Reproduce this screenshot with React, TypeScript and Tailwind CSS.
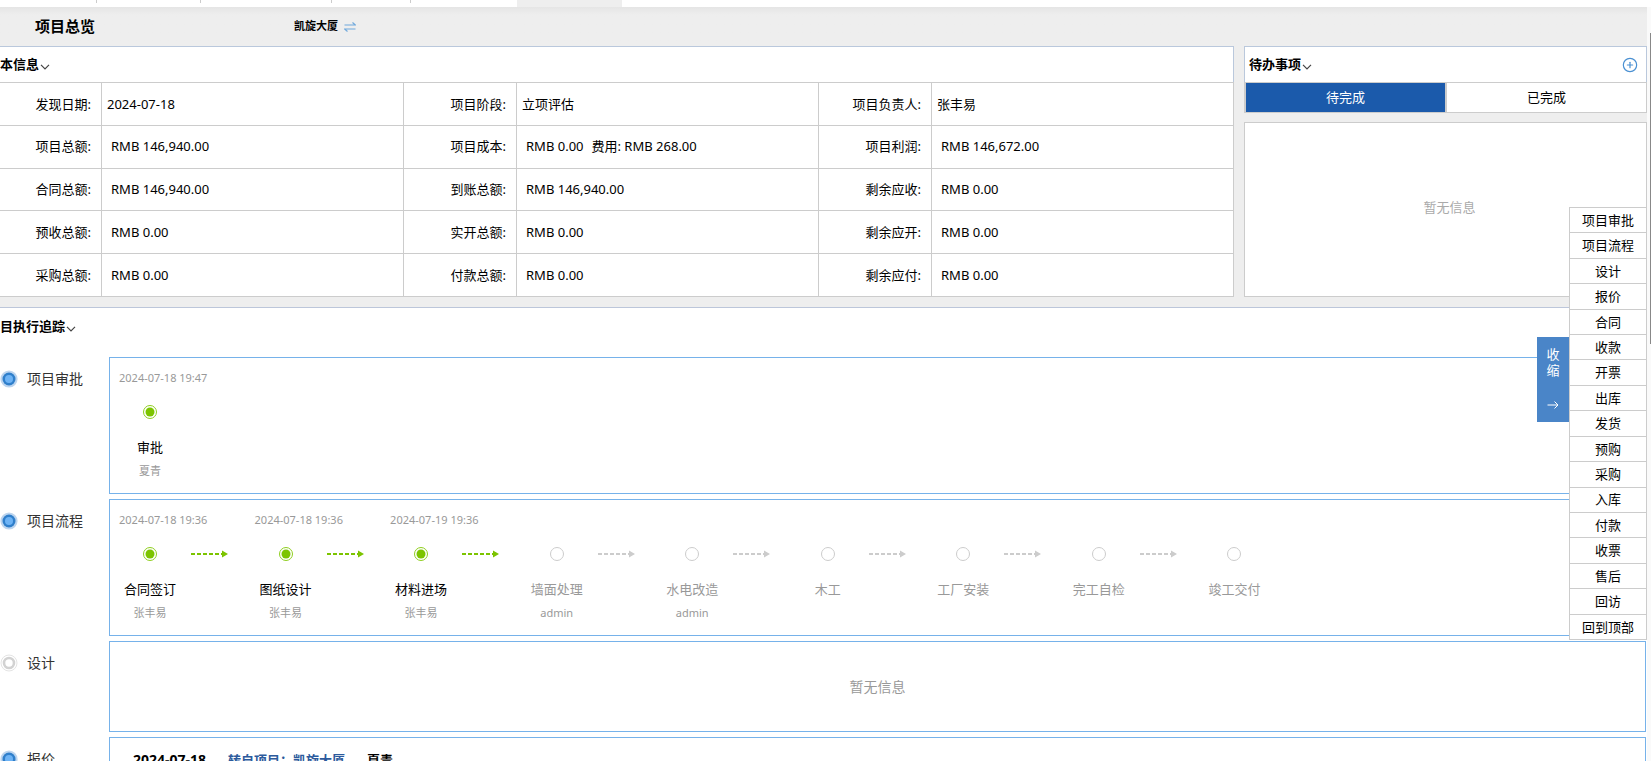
import { useState } from "react";
import { CirclePlus } from "lucide-react";

interface Cell {
  label: string;
  value: string;
  extra?: string;
}

interface Step {
  name: string;
  date?: string;
  person?: string;
  done?: boolean;
}

const info: Cell[][] = [
  [
    { label: "发现日期:", value: "2024-07-18" },
    { label: "项目阶段:", value: "立项评估" },
    { label: "项目负责人:", value: "张丰易" },
  ],
  [
    { label: "项目总额:", value: "RMB 146,940.00" },
    { label: "项目成本:", value: "RMB 0.00", extra: "费用: RMB 268.00" },
    { label: "项目利润:", value: "RMB 146,672.00" },
  ],
  [
    { label: "合同总额:", value: "RMB 146,940.00" },
    { label: "到账总额:", value: "RMB 146,940.00" },
    { label: "剩余应收:", value: "RMB 0.00" },
  ],
  [
    { label: "预收总额:", value: "RMB 0.00" },
    { label: "实开总额:", value: "RMB 0.00" },
    { label: "剩余应开:", value: "RMB 0.00" },
  ],
  [
    { label: "采购总额:", value: "RMB 0.00" },
    { label: "付款总额:", value: "RMB 0.00" },
    { label: "剩余应付:", value: "RMB 0.00" },
  ],
];

const approval: Step[] = [
  { name: "审批", date: "2024-07-18 19:47", person: "夏青", done: true },
];

const flow: Step[] = [
  { name: "合同签订", date: "2024-07-18 19:36", person: "张丰易", done: true },
  { name: "图纸设计", date: "2024-07-18 19:36", person: "张丰易", done: true },
  { name: "材料进场", date: "2024-07-19 19:36", person: "张丰易", done: true },
  { name: "墙面处理", person: "admin" },
  { name: "水电改造", person: "admin" },
  { name: "木工" },
  { name: "工厂安装" },
  { name: "完工自检" },
  { name: "竣工交付" },
];

const anchors = [
  "项目审批", "项目流程", "设计", "报价", "合同", "收款", "开票", "出库", "发货",
  "预购", "采购", "入库", "付款", "收票", "售后", "回访", "回到顶部",
];

const Chevron = () => (
  <svg width="10" height="6" viewBox="0 0 10 6" fill="none" stroke="#444" strokeWidth="1.2" className="mt-1 ml-px">
    <path d="M1 0.8L5 4.8L9 0.8" />
  </svg>
);

const SwapIcon = () => (
  <svg width="12" height="10" viewBox="0 0 12 10" fill="none" stroke="#6fa8dc" strokeWidth="1.2">
    <path d="M0.5 3H11.5L8.5 0.5M11.5 7H0.5L3.5 9.5" />
  </svg>
);

const Dot = ({ active }: { active: boolean }) => (
  <svg width="18" height="18" viewBox="0 0 18 18" className="shrink-0">
    {active ? (
      <>
        <circle cx="9" cy="9" r="8.6" fill="#bcd4ee" />
        <circle cx="9" cy="9" r="6.5" fill="#2f7fcb" />
        <circle cx="9" cy="9" r="4" fill="#6db3f5" />
      </>
    ) : (
      <>
        <circle cx="9" cy="9" r="8" fill="#fff" stroke="#e4e4e4" />
        <circle cx="9" cy="9" r="5" fill="#fff" stroke="#d2d2d2" strokeWidth="2.6" />
      </>
    )}
  </svg>
);

const StepCircle = ({ done }: { done?: boolean }) => (
  <svg width="14" height="14" viewBox="0 0 14 14">
    <circle cx="7" cy="7" r="6.5" fill="#fff" stroke={done ? "#8fce1f" : "#ccc"} />
    {done && <circle cx="7" cy="7" r="4.5" fill="#7cc400" />}
  </svg>
);

const StepArrow = ({ done }: { done?: boolean }) => {
  const color = done ? "#7cc400" : "#ccc";
  return (
    <svg width="37" height="8" viewBox="0 0 37 8" className="ml-px">
      <path d="M0 4H31" stroke={color} strokeWidth="2" strokeDasharray="4 2" />
      <path d="M31 0.5L37 4L31 7.5Z" fill={color} />
    </svg>
  );
};

const Steps = ({ steps }: { steps: Step[] }) => (
  <ol className="grid w-[1220px] grid-cols-9 py-3">
    {steps.map((step, i) => (
      <li key={step.name}>
        <p className="h-4 pl-[9px] text-[11px] leading-4 whitespace-nowrap text-[#999]">{step.date}</p>
        <div className="flex h-[51px] items-center">
          <span className="flex w-20 shrink-0 justify-center">
            <StepCircle done={step.done} />
          </span>
          {i < steps.length - 1 && <StepArrow done={step.done} />}
        </div>
        <p className={`w-20 text-center text-[13px] leading-5 ${step.done ? "text-black" : "text-[#999]"}`}>
          {step.name}
        </p>
        <p className="mt-1 h-5 w-20 text-center text-[11px] leading-5 text-[#999]">{step.person}</p>
      </li>
    ))}
  </ol>
);

interface RowProps {
  title: string;
  active?: boolean;
  children: React.ReactNode;
}

const TrackRow = ({ title, active = true, children }: RowProps) => (
  <div className="mb-[5px] flex">
    <div className="flex h-11 w-[121px] shrink-0 items-center gap-[9px] pl-3 text-sm text-[#333]">
      <Dot active={active} />
      {title}
    </div>
    <div className="mr-px min-w-0 flex-1 border border-[#76b2ea]">{children}</div>
  </div>
);

const InfoPanel = () => (
  <section className="flex-1 bg-white">
    <h2 className="flex h-9 items-center border-t border-r border-[#bac8dc] pl-3 text-[13px] font-bold">
      本信息
      <Chevron />
    </h2>
    <table className="h-[215px] w-full table-fixed border-collapse text-[13px]">
      <colgroup>
        {[0, 1, 2].map((i) => [
          <col key={`l${i}`} className="w-[113px]" />,
          <col key={`v${i}`} />,
        ])}
      </colgroup>
      <tbody>
        {info.map((row, r) => (
          <tr key={r}>
            {row.map((cell) => [
              <th key={cell.label} scope="row" className="border border-[#ccc] pt-px pr-2.5 text-right font-normal whitespace-nowrap">
                {cell.label}
              </th>,
              <td key={`${cell.label}v`} className={`border border-[#ccc] pt-px ${r === 0 ? "pl-[5px]" : "pl-[9px]"}`}>
                {cell.value}
                {cell.extra && <span className="ml-2">{cell.extra}</span>}
              </td>,
            ])}
          </tr>
        ))}
      </tbody>
    </table>
  </section>
);

const TodoPanel = () => {
  const [tab, setTab] = useState(0);
  return (
    <section className="flex w-[403px] flex-col">
      <div className="flex h-9 items-center border border-b-0 border-[#bac8dc] bg-white pr-2 pl-1">
        <h2 className="flex items-center text-[13px] font-bold">
          待办事项
          <Chevron />
        </h2>
        <button aria-label="新增待办" className="ml-auto cursor-pointer">
          <CirclePlus size={16} strokeWidth={1.8} color="#4a90d2" />
        </button>
      </div>
      <div className="flex h-[31px] gap-0.5 border border-[#ccc] bg-[#ccc] pl-px text-[13px]">
        {["待完成", "已完成"].map((name, i) => (
          <button
            key={name}
            onClick={() => setTab(i)}
            className={`flex-1 cursor-pointer ${tab === i ? "bg-[#1b5aab] text-white" : "bg-white text-black"}`}
          >
            {name}
          </button>
        ))}
      </div>
      <div className="mt-[9px] flex flex-1 items-center justify-center border border-[#ccc] bg-white pb-1 pl-2 text-[13px] text-[#aaa]">
        暂无信息
      </div>
    </section>
  );
};

const SideNav = () => {
  const [open, setOpen] = useState(true);
  return (
    <aside className="fixed top-[207px] right-1 flex items-start text-[13px]">
      <button
        onClick={() => setOpen(!open)}
        className="mt-[130px] flex h-[85px] w-8 cursor-pointer flex-col items-center bg-[#4a85c8] pt-[9px] leading-4 text-white"
      >
        <span>收</span>
        <span>缩</span>
        <svg width="12" height="10" viewBox="0 0 12 10" fill="none" stroke="#fff" className="mt-[22px]">
          <path d="M0.5 5H11M7.5 1.5L11 5L7.5 8.5" />
        </svg>
      </button>
      {open && (
        <nav className="grid h-[433px] w-[78px] auto-rows-fr border-x border-b border-[#ccc] bg-white">
          {anchors.map((name) => (
            <a key={name} href="#" className="flex items-center justify-center border-t border-[#ccc] pt-px text-black">
              {name}
            </a>
          ))}
        </nav>
      )}
    </aside>
  );
};

const App = (): React.JSX.Element => {
  return (
    <div
      lang="zh-CN"
      className="flex h-screen flex-col overflow-hidden bg-white font-['Noto_Sans','Noto_Sans_CJK_SC',sans-serif] text-black"
    >
      {/* bottom edge of the tab bar */}
      <div className="flex h-[7px] shrink-0">
        <span className="h-[3px] w-[97px] border-r border-[#ccc]" />
        <span className="h-[3px] w-[104px] border-r border-[#ccc]" />
        <span className="h-[3px] w-[131px] border-r border-[#ccc]" />
        <span className="h-[3px] w-[79px] border-r border-[#ccc]" />
        <span className="ml-[106px] w-[105px] bg-[#eee]" />
      </div>

      <div className="flex min-h-0 flex-1">
        <main className="min-w-0 flex-1 overflow-hidden bg-[#eee]">
          <div className="-ml-3">
            <header className="flex h-[39px] items-center bg-linear-to-b from-[#e5e5e5] to-[#eee] to-20% pl-[47px]">
              <h1 className="w-[259px] text-[15px] font-bold">项目总览</h1>
              <span className="text-[11px] font-bold">凯旋大厦</span>
              <button aria-label="切换项目" className="ml-1.5 cursor-pointer">
                <SwapIcon />
              </button>
            </header>

            <div className="flex gap-2.5 pb-2.5">
              <InfoPanel />
              <TodoPanel />
            </div>

            <section className="border-t border-[#bcc6da] bg-white">
              <h2 className="mb-[11px] flex h-[38px] items-center pl-3 text-[13px] font-bold">
                目执行追踪
                <Chevron />
              </h2>
              <TrackRow title="项目审批">
                <Steps steps={approval} />
              </TrackRow>
              <TrackRow title="项目流程">
                <Steps steps={flow} />
              </TrackRow>
              <TrackRow title="设计" active={false}>
                <p className="flex h-[89px] items-center justify-center text-sm text-[#999]">暂无信息</p>
              </TrackRow>
              <TrackRow title="报价">
                <div className="flex h-[89px] items-start gap-[22px] pt-3 pl-[23px] text-[13px] leading-5 font-bold">
                  <span className="text-sm">2024-07-18</span>
                  <a href="#" className="text-[#2c5a9c]">转自项目：凯旋大厦</a>
                  <span>夏青</span>
                </div>
              </TrackRow>
            </section>
          </div>
        </main>
        {/* scrollbar */}
        <div className="flex w-1 justify-end bg-[#fafafa] pt-[26px]">
          <div className="h-[311px] w-px bg-[#888]" />
        </div>
      </div>

      <SideNav />
    </div>
  );
};

export default App;
